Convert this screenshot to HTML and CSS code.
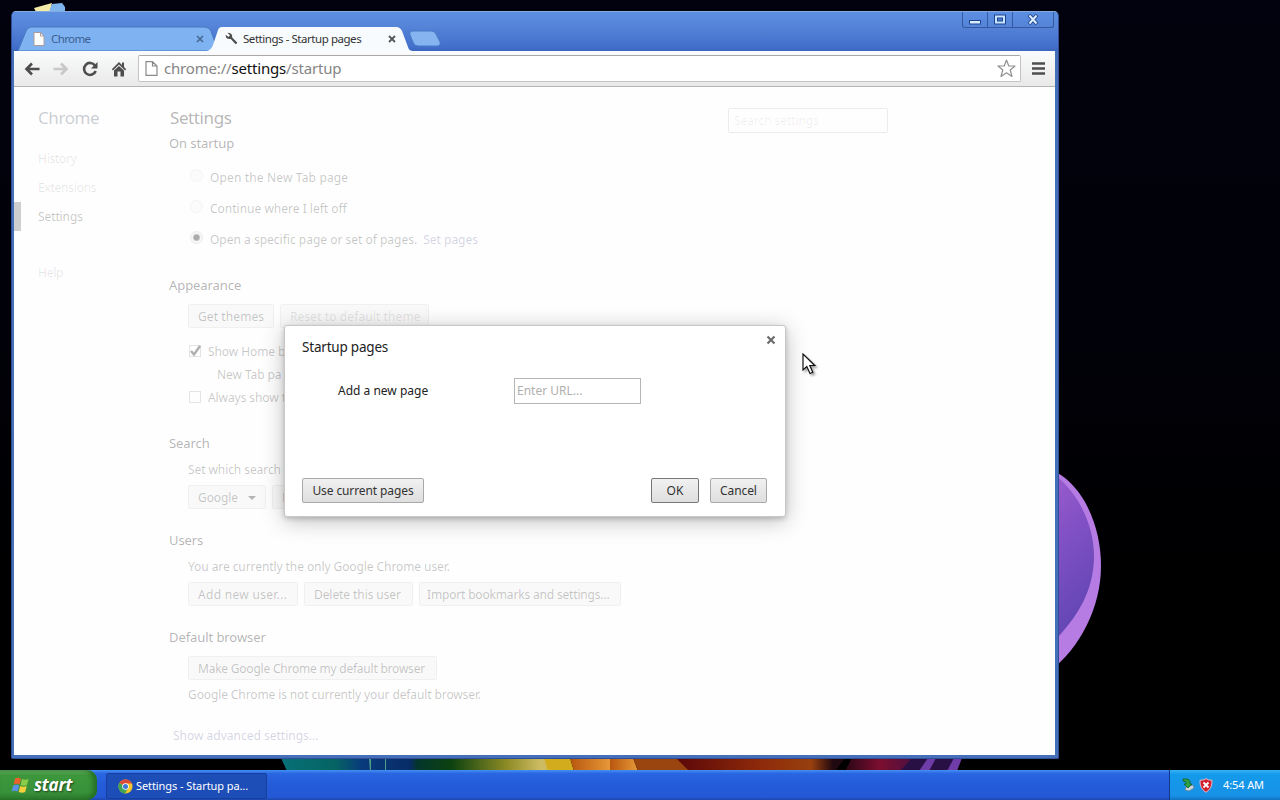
FILE: index.html
```html
<!DOCTYPE html>
<html lang="en">
<head>
    <meta charset="UTF-8">
    <meta name="viewport" content="width=device-width, initial-scale=1.0">
    <title>Settings - Startup pages</title>
    <link rel="stylesheet" href="styles.css">
</head>
<body>
    <div class="desktop">
        <!-- Wallpaper -->
        <svg class="wallpaper" width="1280" height="800" viewBox="0 0 1280 800">
            <defs>
                <linearGradient id="petal" x1="0" y1="0" x2="0.3" y2="1">
                    <stop offset="0" stop-color="#a35fd0"/>
                    <stop offset="0.5" stop-color="#8050c4"/>
                    <stop offset="1" stop-color="#6246b4"/>
                </linearGradient>
                <linearGradient id="strip" gradientUnits="userSpaceOnUse" x1="280" y1="0" x2="965" y2="0">
                    <stop offset="0" stop-color="#087078"/>
                    <stop offset="0.08" stop-color="#056462"/>
                    <stop offset="0.12" stop-color="#093a7c"/>
                    <stop offset="0.19" stop-color="#082c66"/>
                    <stop offset="0.2" stop-color="#04352c"/>
                    <stop offset="0.25" stop-color="#0c4210"/>
                    <stop offset="0.33" stop-color="#8c8a25"/>
                    <stop offset="0.38" stop-color="#cdbb62"/>
                    <stop offset="1" stop-color="#bba74b"/>
                </linearGradient>
                <linearGradient id="orange" x1="0" y1="0" x2="1" y2="0">
                    <stop offset="0" stop-color="#b8560f"/>
                    <stop offset="1" stop-color="#e89a38"/>
                </linearGradient>
                <linearGradient id="red" x1="0" y1="0" x2="1" y2="0">
                    <stop offset="0" stop-color="#5c0808"/>
                    <stop offset="0.5" stop-color="#8d2a0a"/>
                    <stop offset="0.8" stop-color="#97400e"/>
                    <stop offset="0.93" stop-color="#200810"/>
                    <stop offset="1" stop-color="#200810"/>
                </linearGradient>
                <linearGradient id="plum" x1="0" y1="0" x2="1" y2="0">
                    <stop offset="0" stop-color="#2a0616"/>
                    <stop offset="0.5" stop-color="#7c0e30"/>
                    <stop offset="1" stop-color="#4a1040"/>
                </linearGradient>
            </defs>
            <path d="M1040 466C1078 474 1101 520 1101 566C1101 607 1080 648 1050 671Z" fill="#b77ce4"/>
            <path d="M1040 466C1072 480 1094 520 1094 556C1094 588 1080 616 1050 645Z" fill="url(#petal)"/>
            <path d="M281 758H550V771H287Z" fill="url(#strip)"/>
            <path d="M369 758H371V771H370ZM385 758H386V771H385Z" fill="#4d9f85"/>
            <path d="M544 758H570L574 771H548Z" fill="#d2ac1c"/>
            <path d="M570 758H611V771H574Z" fill="url(#orange)"/>
            <path d="M610 758H633L638 771H610Z" fill="url(#orange)"/>
            <path d="M633 758H678L690 771H638Z" fill="#9a4410"/>
            <path d="M676 758H845L835 771H689Z" fill="url(#red)"/>
            <path d="M852 758H915L910 771H845Z" fill="url(#plum)"/>
            <path d="M912 758H961L956 771H900Z" fill="#281044"/>
            <path d="M928 758H936L929 771H919ZM954 758H962L957 771H947Z" fill="#6f3ca8"/>
            <path d="M34 8L52 3L50 12H36Z" fill="#f3eaa8"/>
            <path d="M49 12L52 4L62 3L65 7V12Z" fill="#7eb5ee"/>
        </svg>

        <div class="window">
            <div class="titlebar">
                <svg class="tabs" width="430" height="25" viewBox="0 0 430 25">
                    <path d="M3 25L11 5Q13 1 16 1H190Q194 1 196 5L203 25Z" fill="#7fb2f0" stroke="#4777c0"/>
                    <path d="M395 9Q394 5 398 5H416Q420 5 421 8L425 16Q426 20 422 20H403Q399 20 398 16Z" fill="#86b4f0" stroke="#4a78c4"/>
                    <path d="M192 25Q196 24 198 19L203 4Q204 1 207 1H381Q385 1 387 5L393 21Q394 25 398 25Z" fill="#f8fbfe"/>
                </svg>
                <div class="tab tab-back">
                    <svg width="12" height="14" viewBox="0 0 12 14"><path d="M1 .5H7.500L11 4V13.500H1Z" fill="#fff" stroke="#ae9c9d"/><path d="M7.500 .5V4H11" fill="none" stroke="#ae9c9d"/></svg>
                    <span class="tab-title">Chrome</span>
                    <svg class="tab-close" width="8" height="8" viewBox="0 0 8 8"><path d="M1 1L7 7M7 1L1 7" stroke="#466794" stroke-width="1.600"/></svg>
                </div>
                <div class="tab tab-front">
                    <svg width="13" height="13" viewBox="0 0 13 13"><path d="M2.500 .8L5 3.200L3.500 5L.8 2.800Q.2 6.500 4 7Q5 7 5.500 6.700L10.200 11.800Q12 12.500 12.200 10.500L7.200 5.500Q7.800 1 2.500 .8Z" fill="#4c4c4c"/></svg>
                    <span class="tab-title">Settings - Startup pages</span>
                    <svg class="tab-close" width="8" height="8" viewBox="0 0 8 8"><path d="M1 1L7 7M7 1L1 7" stroke="#555" stroke-width="1.800"/></svg>
                </div>
                <div class="controls">
                    <span class="control"><svg width="12" height="11" viewBox="0 0 12 11"><rect x=".5" y="6.500" width="11" height="3.500" fill="#d7ecff" stroke="#1e4690"/></svg></span>
                    <span class="control"><svg width="12" height="11" viewBox="0 0 12 11"><rect x=".5" y="1" width="11" height="9" fill="#c8e4ff" stroke="#1e4690"/><rect x="3.500" y="4" width="5" height="3" fill="#4c7fcb" stroke="#1e4690"/></svg></span>
                    <span class="control control-close"><svg width="12" height="11" viewBox="0 0 12 11"><path d="M2 1L10 10M10 1L2 10" stroke="#264c91" stroke-width="4"/><path d="M2.500 1.500L9.500 9.500M9.500 1.500L2.500 9.500" stroke="#dcecff" stroke-width="2"/></svg></span>
                </div>
            </div>

            <div class="toolbar">
                <svg width="16" height="14" viewBox="0 0 16 14"><path d="M15.500 7H3M8 1.500L2.500 7L8 12.500" fill="none" stroke="#4d4d4d" stroke-width="2.600"/></svg>
                <svg width="16" height="14" viewBox="0 0 16 14"><path d="M.5 7H13M8 1.500L13.500 7L8 12.500" fill="none" stroke="#c8c8c8" stroke-width="2.600"/></svg>
                <svg width="16" height="16" viewBox="0 0 16 16"><path d="M13 4.500A6 6 0 1 0 13.700 10" fill="none" stroke="#4d4d4d" stroke-width="2.600"/><path d="M15.500 1V7.500H9Z" fill="#4d4d4d"/></svg>
                <svg width="16" height="16" viewBox="0 0 16 16"><path d="M8 1L.8 8.200L2 9.400L8 3.600L14 9.400L15.200 8.200L13 6V1.500H11V4Z" fill="#4d4d4d"/><path d="M3 9.500L8 5L13 9.500V15.500H9.500V10.500H6.500V15.500H3Z" fill="#4d4d4d"/></svg>
                <div class="omnibox">
                    <svg width="13" height="15" viewBox="0 0 13 15"><path d="M1 .7H7.500L12 5V14.300H1Z M7.500 .7V5H12" fill="#fff" stroke="#8a8a8a" stroke-width="1.200"/></svg>
                    <span class="url">chrome://<b>settings</b>/startup</span>
                    <svg class="star" width="19" height="19" viewBox="0 0 19 19"><path d="M9.500 1L11.800 7H18L13.200 11L15 17.500L9.500 13.800L4 17.500L5.800 11L1 7H7.200Z" fill="#fff" stroke="#909090" stroke-width="1.200" stroke-linejoin="round"/></svg>
                </div>
                <svg class="menu" width="13" height="13" viewBox="0 0 13 13"><path d="M0 1.500H13M0 6.500H13M0 11.500H13" stroke="#4d4d4d" stroke-width="2.500"/></svg>
            </div>

            <div class="page">
                <nav class="sidebar">
                    <h1>Chrome</h1>
                    <a class="nav-item">History</a>
                    <a class="nav-item">Extensions</a>
                    <a class="nav-item nav-current">Settings</a>
                    <a class="nav-item nav-help">Help</a>
                </nav>
                <main class="settings">
                    <header class="settings-header">
                        <h1>Settings</h1>
                        <div class="search-box">Search settings</div>
                    </header>

                    <section class="section section-startup">
                        <h2>On startup</h2>
                        <div class="option t-wide"><i class="radio"></i><span>Open the New Tab page</span></div>
                        <div class="option"><i class="radio"></i><span>Continue where I left off</span></div>
                        <div class="option"><i class="radio radio-on"></i><span>Open a specific page or set of pages.</span><a class="link">Set pages</a></div>
                    </section>

                    <section class="section section-appearance">
                        <h2>Appearance</h2>
                        <div class="buttons">
                            <span class="btn w-themes">Get themes</span>
                            <span class="btn w-reset">Reset to default theme</span>
                        </div>
                        <div class="checks">
                            <div class="check"><i class="box"><svg width="12" height="12" viewBox="0 0 12 12"><path d="M2 6L5 9.500L11 1" fill="none" stroke="#222" stroke-width="2.400"/></svg></i><span>Show Home b</span></div>
                            <div class="check check-sub">New Tab pa</div>
                            <div class="check"><i class="box"></i><span>Always show t</span></div>
                        </div>
                    </section>

                    <section class="section">
                        <h2>Search</h2>
                        <p>Set which search</p>
                        <div class="buttons">
                            <span class="btn w-google">Google<i class="caret"></i></span>
                            <span class="btn w-manage">M</span>
                        </div>
                    </section>

                    <section class="section">
                        <h2>Users</h2>
                        <p>You are currently the only Google Chrome user.</p>
                        <div class="buttons">
                            <span class="btn w-add">Add new user...</span>
                            <span class="btn w-delete">Delete this user</span>
                            <span class="btn w-import">Import bookmarks and settings...</span>
                        </div>
                    </section>

                    <section class="section section-default">
                        <h2>Default browser</h2>
                        <div class="buttons">
                            <span class="btn w-default">Make Google Chrome my default browser</span>
                        </div>
                        <p>Google Chrome is not currently your default browser.</p>
                    </section>

                    <a class="link advanced">Show advanced settings...</a>
                </main>
            </div>

            <div class="dialog">
                <div class="dialog-head">
                    <span class="dialog-title">Startup pages</span>
                    <svg width="10" height="10" viewBox="0 0 10 10"><path d="M1.500 1.500L8.500 8.500M8.500 1.500L1.500 8.500" stroke="#6c6c6c" stroke-width="2.200"/></svg>
                </div>
                <div class="dialog-row">
                    <label class="dialog-label">Add a new page</label>
                    <div class="dialog-input">Enter URL...</div>
                </div>
                <div class="dialog-foot">
                    <button class="dialog-btn b-current">Use current pages</button>
                    <button class="dialog-btn b-ok">OK</button>
                    <button class="dialog-btn b-cancel">Cancel</button>
                </div>
            </div>
        </div>

        <svg class="cursor" width="16" height="23" viewBox="0 0 16 23"><path d="M1 1V17L4.800 13.500L8 20.500L10.800 19.200L7.800 12.500H12.800Z" fill="#fff" stroke="#111" stroke-width="1.200"/></svg>

        <div class="taskbar">
            <div class="start">
                <svg width="19" height="18" viewBox="0 0 19 18">
                    <path d="M4 2.500Q7 .8 10 2.500L8.500 8.500Q5.500 7 2.500 8.500Z" fill="#e8622c"/>
                    <path d="M11 3Q14 4.500 17.500 3L16 9Q12.500 10.500 9.500 9Z" fill="#8acb48"/>
                    <path d="M2.200 9.500Q5.300 8 8.200 9.500L6.700 15.500Q4 14 .7 15.500Z" fill="#5c91e8"/>
                    <path d="M9.200 10Q12.300 11.500 15.700 10L14.200 16Q11 17.500 7.700 16Z" fill="#f6cf3c"/>
                </svg>
                <span>start</span>
            </div>
            <div class="task">
                <svg width="15" height="15" viewBox="0 0 16 16">
                    <circle cx="8" cy="8" r="7.500" fill="#f3c62e"/>
                    <path d="M8 8L1.500 4.250A7.500 7.500 0 0 1 14.800 4.800H8Z" fill="#df4a38"/>
                    <path d="M8 8L1.500 4.250A7.500 7.500 0 0 0 7.500 15.500L10.500 10Z" fill="#3fa552"/>
                    <circle cx="8" cy="8" r="3.500" fill="#fff"/>
                    <circle cx="8" cy="8" r="2.700" fill="#3d78d6"/>
                </svg>
                <span>Settings - Startup pa...</span>
            </div>
            <div class="tray">
                <svg width="14" height="14" viewBox="0 0 14 14"><path d="M5 9L12 7L13 10L8 13L4 12Z" fill="#cbd6dc" stroke="#667888" stroke-width=".7"/><path d="M2 1L7 1L9 3V6L11 6L7 10L3 6H5V4L2 3Z" fill="#2fa044" stroke="#14612a" stroke-width=".8"/></svg>
                <svg width="14" height="15" viewBox="0 0 14 15"><path d="M7 .7Q9.500 2.500 13 2.200Q13.500 10.500 7 14.300Q.5 10.500 1 2.200Q4.500 2.500 7 .7Z" fill="#d1202c" stroke="#eab9c4"/><path d="M4.500 4.500L9.500 9.500M9.500 4.500L4.500 9.500" stroke="#fff" stroke-width="1.800"/></svg>
                <span class="clock">4:54 AM</span>
            </div>
        </div>
    </div>
</body>
</html>
```

FILE: styles.css
```css
* {
    box-sizing: border-box;
}
body {
    margin: 0;
    font-family: "Noto Sans", "Open Sans", sans-serif;
    font-size: 12px;
    color: #222;
}
h1, h2, p {
    margin: 0;
    font-weight: normal;
}
svg {
    display: block;
    flex: none;
}
.desktop {
    position: relative;
    width: 1280px;
    height: 800px;
    overflow: hidden;
    background: linear-gradient(#02020e, #010109 40%, #000 75%);
    white-space: nowrap;
}
.wallpaper {
    position: absolute;
    left: 0;
    top: 0;
}

/* Browser window */
.window {
    position: absolute;
    left: 11px;
    top: 11px;
    width: 1048px;
    height: 748px;
    display: flex;
    flex-direction: column;
    padding: 0 3px 3px 2px;
    background: #456fb8;
    border: 1px solid #304f96;
    border-top-color: #87a9dd;
    border-radius: 5px 5px 2px 2px;
}
.titlebar {
    position: relative;
    display: flex;
    align-items: flex-end;
    height: 39px;
    margin: 0 -3px 0 -2px;
    padding-left: 21px;
    border-radius: 4px 4px 0 0;
    background: linear-gradient(#5c8fe2, #5584d8 35%, #426fcb 90%, #3c66bd);
}
.tabs {
    position: absolute;
    left: 3px;
    bottom: 0;
}
.tab {
    position: relative;
    display: flex;
    align-items: center;
    gap: 5px;
    height: 25px;
    color: #3a5f92;
}
.tab-back {
    width: 171px;
}
.tab-title {
    font-size: 11.5px;
    letter-spacing: -0.45px;
}
.tab-back .tab-title {
    margin-left: 1px;
    letter-spacing: -0.6px;
}
.tab-front {
    width: 171px;
    margin-left: 21px;
    color: #333;
}
.tab-close {
    margin-left: auto;
}
.controls {
    position: absolute;
    right: 4px;
    top: 0;
    display: flex;
    height: 16px;
    border: 1px solid #35599f;
    border-top: 0;
    border-radius: 0 0 3px 3px;
}
.control {
    display: flex;
    align-items: center;
    justify-content: center;
    width: 25px;
    border-right: 1px solid #35599f;
}
.control-close {
    width: 40px;
    border-right: 0;
}
.toolbar {
    display: flex;
    align-items: center;
    gap: 13px;
    height: 36px;
    padding: 0 10px;
    background: linear-gradient(#fafbfc, #e9e9e9);
    border-bottom: 1px solid #b5b5b5;
}
.omnibox {
    flex: 1;
    display: flex;
    align-items: center;
    height: 27px;
    margin-left: -2px;
    padding: 0 4px 0 6px;
    background: #fff;
    border: 1px solid #c4c4c4;
    border-top-color: #a8a8a8;
    border-radius: 2px;
}
.url {
    margin: -2px 0 0 6px;
    font-size: 15px;
    letter-spacing: -0.18px;
    color: #858585;
}
.url b {
    font-weight: normal;
    color: #111;
}
.star {
    margin-left: auto;
}
.menu {
    margin-left: -2px;
}

/* Settings page, faded while the dialog is open */
.page {
    flex: 1;
    display: flex;
    background: #fefefe;
    color: rgba(0, 0, 0, 0.22);
    letter-spacing: -0.08px;
}
.sidebar {
    display: flex;
    flex-direction: column;
    width: 155px;
    padding-top: 20px;
}
h1 {
    font-size: 17px;
    line-height: 22px;
    letter-spacing: -0.4px;
    color: rgba(0, 0, 0, 0.3);
}
.sidebar h1 {
    padding-left: 24px;
    margin-bottom: 15px;
    color: rgba(40, 55, 80, 0.25);
}
.nav-item {
    height: 29px;
    padding-left: 24px;
    line-height: 29px;
    letter-spacing: -0.25px;
    color: rgba(0, 0, 0, 0.1);
}
.nav-current {
    padding-left: 17px;
    border-left: 7px solid #cfcfcf;
    letter-spacing: -0.1px;
    color: rgba(0, 0, 0, 0.22);
}
.nav-help {
    margin-top: 27px;
}
.settings {
    flex: 1;
    padding-top: 20px;
}
.settings-header {
    display: flex;
    height: 26px;
    padding-left: 1px;
}
.settings-header h1 {
    width: 63px;
}
.search-box {
    width: 160px;
    height: 25px;
    margin-left: 495px;
    margin-top: 1px;
    padding-left: 5px;
    line-height: 23px;
    border: 1px solid rgba(0, 0, 0, 0.07);
    border-radius: 2px;
    color: rgba(0, 0, 0, 0.07);
}
.section {
    margin-bottom: 21px;
}
.section-startup {
    margin-bottom: 20px;
}
.section-appearance {
    margin-bottom: 24px;
}
h2 {
    height: 20px;
    font-size: 13px;
    line-height: 20px;
    color: rgba(0, 0, 0, 0.3);
}
.section-startup h2 {
    margin-bottom: 9px;
}
.section p {
    height: 20px;
    margin: 7px 0 5px 19px;
    line-height: 20px;
}
.option {
    display: flex;
    align-items: center;
    height: 31px;
    padding-left: 21px;
    letter-spacing: 0;
}
.t-wide {
    letter-spacing: 0.15px;
}
.radio {
    width: 13px;
    height: 13px;
    margin: -4px 7px 0 0;
    border: 1px solid rgba(0, 0, 0, 0.04);
    border-radius: 50%;
    background: rgba(0, 0, 0, 0.01);
}
.radio-on {
    background: radial-gradient(circle, #aaa 0 2.5px, #f6f6f6 4px);
}
.link {
    color: rgba(30, 30, 120, 0.2);
}
.option .link {
    margin-left: 6px;
}
.buttons {
    display: flex;
    gap: 6px;
    padding-left: 19px;
}
.section-appearance .buttons,
.section-default .buttons {
    margin-top: 9px;
}
.btn {
    height: 24px;
    padding-left: 9px;
    line-height: 23px;
    border: 1px solid rgba(0, 0, 0, 0.04);
    border-radius: 2px;
    background: rgba(0, 0, 0, 0.018);
}
.w-themes {
    width: 86px;
    letter-spacing: 0.1px;
}
.w-reset {
    width: 149px;
    color: rgba(0, 0, 0, 0.11);
    letter-spacing: 0.1px;
}
.w-google {
    width: 78px;
}
.w-manage {
    width: 80px;
}
.w-add {
    width: 110px;
    letter-spacing: 0.3px;
}
.w-delete {
    width: 109px;
}
.w-import {
    width: 202px;
    padding-left: 7px;
    letter-spacing: -0.17px;
}
.w-default {
    width: 249px;
    letter-spacing: -0.22px;
}
.caret {
    display: inline-block;
    margin-left: 10px;
    vertical-align: 2px;
    border: 4.5px solid transparent;
    border-top-color: rgba(0, 0, 0, 0.27);
    border-bottom: 0;
}
.checks {
    margin-top: 12px;
}
.check {
    display: flex;
    align-items: center;
    height: 23px;
    padding-left: 20px;
}
.check-sub {
    padding-left: 48px;
}
.box {
    width: 12px;
    height: 12px;
    margin: -2px 7px 0 0;
    border: 1px solid rgba(0, 0, 0, 0.1);
}
.box svg {
    margin: -1px;
    opacity: 0.35;
}
.section-default .buttons + p {
    margin: 5px 0 0 19px;
    letter-spacing: -0.11px;
}
.advanced {
    display: block;
    padding-left: 4px;
    line-height: 20px;
    letter-spacing: 0;
}

/* Startup pages dialog */
.dialog {
    position: absolute;
    left: 272px;
    top: 313px;
    width: 502px;
    height: 192px;
    padding: 10px 17px 13px;
    display: flex;
    flex-direction: column;
    background: #fff;
    border: 1px solid #c8c8c8;
    border-radius: 3px;
    box-shadow: 0 4px 22px rgba(0, 0, 0, 0.25), 0 2px 5px rgba(0, 0, 0, 0.18);
}
.dialog-head {
    display: flex;
    justify-content: space-between;
    height: 22px;
    margin-right: -8px;
}
.dialog-head svg {
    margin-top: -1px;
}
.dialog-title {
    font-size: 13.5px;
    line-height: 22px;
    letter-spacing: -0.2px;
}
.dialog-row {
    display: flex;
    align-items: center;
    margin-top: 20px;
    padding-left: 36px;
}
.dialog-label {
    width: 176px;
    margin-top: -1px;
}
.dialog-input {
    width: 127px;
    height: 26px;
    padding-left: 2px;
    line-height: 24px;
    border: 1px solid #b5b5b5;
    color: #b0b0b0;
}
.dialog-foot {
    display: flex;
    margin-top: auto;
}
.dialog-btn {
    height: 25px;
    padding: 0;
    font: inherit;
    color: #333;
    background: linear-gradient(#f1f1f1, #dedede);
    border: 1px solid #a8a8a8;
    border-radius: 2px;
}
.b-current {
    width: 122px;
    letter-spacing: -0.1px;
}
.b-ok {
    width: 48px;
    margin-left: auto;
    border-color: #777;
}
.b-cancel {
    width: 57px;
    margin: 0 1px 0 11px;
    letter-spacing: -0.1px;
}

.cursor {
    position: absolute;
    left: 802px;
    top: 353px;
    filter: drop-shadow(2px 2px 1px rgba(0, 0, 0, 0.35));
}

/* Taskbar */
.taskbar {
    position: absolute;
    left: 0;
    bottom: 0;
    width: 1280px;
    height: 30px;
    display: flex;
    background: linear-gradient(#4390f3, #2a66e2 12%, #235bd8 50%, #2458d6 90%, #1d47ae);
    color: #fff;
}
.start {
    display: flex;
    align-items: center;
    gap: 4px;
    width: 97px;
    padding-left: 11px;
    border-radius: 0 10px 10px 0;
    background: linear-gradient(#67af64, #3d973b 18%, #38913a 75%, #2b772a);
    box-shadow: inset -4px 0 5px #236f25;
    font: italic bold 17px "Open Sans", sans-serif;
    text-shadow: 1px 1px 2px #1d431d;
}
.start span {
    margin-top: -2px;
    letter-spacing: -0.2px;
}
.task {
    display: flex;
    align-items: center;
    gap: 3px;
    width: 161px;
    height: 26px;
    margin: 3px 0 0 9px;
    padding-left: 11px;
    background: #1d4eb7;
    border: 1px solid #173f9c;
    border-radius: 2px;
    font-size: 11px;
    letter-spacing: -0.08px;
}
.task span {
    margin-top: -1px;
}
.tray {
    display: flex;
    align-items: center;
    gap: 4px;
    width: 111px;
    margin-left: auto;
    padding-left: 11px;
    border-left: 1px solid #12388c;
    background: linear-gradient(#35b2f3, #149aeb 15%, #1791e6 85%, #1273c4);
    font-size: 11px;
}
.clock {
    margin: -1px 0 0 6px;
    letter-spacing: -0.1px;
}
```
